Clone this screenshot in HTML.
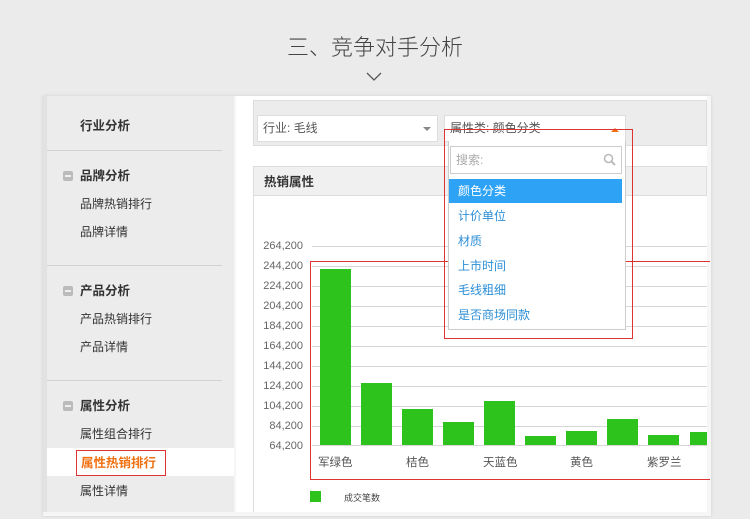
<!DOCTYPE html>
<html><head><meta charset="utf-8"><style>
*{margin:0;padding:0;box-sizing:border-box}
body{width:750px;height:519px;background:#ebebeb;font-family:"Liberation Sans","Noto Sans CJK SC",sans-serif;position:relative;overflow:hidden;color:#333}
.a{position:absolute}
.title{left:0;width:750px;top:30px;text-align:center;font-size:22px;color:#444;font-weight:300}
.side{left:43px;top:96px;width:191px;height:416px;background:#ececec;border-left:4px solid #e2e2e2}
.s{position:absolute;font-size:12px;color:#333;line-height:14px}
.b{font-weight:bold;font-size:12.5px}
.hr{position:absolute;left:0;width:175px;height:1px;background:#d2d2d2}
.ic{position:absolute;left:16px;width:10px;height:10px;background:#bbb;border-radius:2px}
.ic:after{content:"";position:absolute;left:2px;top:4px;width:6px;height:2px;background:#eee}
.main{left:236px;top:96px;width:471px;height:416px;background:#fff}
.grid{position:absolute;left:312px;width:395px;height:1px;background:#d6d6d6}
.yl{position:absolute;left:257px;width:46px;text-align:right;font-size:11px;color:#666;line-height:13px}
.bar{position:absolute;width:31px;background:#2ec21c;bottom:74px}
.xl{position:absolute;top:454px;font-size:11.5px;color:#555}
.dd{font-size:12px;color:#2d8fd6;position:absolute;left:458px;line-height:14px}
</style></head><body>
<div class="a title">三、竞争对手分析</div>
<svg class="a" style="left:366px;top:71px" width="16" height="12"><path d="M1 2 L8 9 L15 2" stroke="#555" stroke-width="1.3" fill="none"/></svg>
<div class="a" style="left:43px;top:96px;width:668px;height:420px;background:#f6f6f6;box-shadow:0 0 3px #ccc"></div>
<div class="a side">
<div class="s b" style="left:33px;top:23px">行业分析</div>
<div class="hr" style="top:54px"></div>
<div class="ic" style="top:75px"></div><div class="s b" style="left:33px;top:73px">品牌分析</div>
<div class="s" style="left:33px;top:101px">品牌热销排行</div>
<div class="s" style="left:33px;top:129px">品牌详情</div>
<div class="hr" style="top:169px"></div>
<div class="ic" style="top:190px"></div><div class="s b" style="left:33px;top:188px">产品分析</div>
<div class="s" style="left:33px;top:216px">产品热销排行</div>
<div class="s" style="left:33px;top:244px">产品详情</div>
<div class="hr" style="top:284px"></div>
<div class="ic" style="top:305px"></div><div class="s b" style="left:33px;top:303px">属性分析</div>
<div class="s" style="left:33px;top:331px">属性组合排行</div>
<div class="a" style="left:0;top:352px;width:187px;height:28px;background:#fff"></div>
<div class="a" style="left:29px;top:354px;width:90px;height:26px;border:1px solid #d33"></div>
<div class="s b" style="left:34px;top:360px;color:#f07010">属性热销排行</div>
<div class="s" style="left:33px;top:388px">属性详情</div>
</div>
<div class="a main"></div>
<div class="a" style="left:253px;top:100px;width:454px;height:46px;background:#ececec;border:1px solid #ddd"></div>
<div class="a" style="left:257px;top:115px;width:181px;height:27px;background:#fff;border:1px solid #ddd;font-size:12px;color:#555;padding:5px 5px;line-height:14px">行业: 毛线</div>
<div class="a" style="left:423px;top:127px;border:4px solid transparent;border-top:4px solid #888"></div>
<div class="a" style="left:444px;top:115px;width:182px;height:27px;background:#fff;border:1px solid #ddd;font-size:12px;color:#555;padding:5px 5px;line-height:14px">属性类: 颜色分类</div>
<div class="a" style="left:611px;top:124px;border:4px solid transparent;border-bottom:4px solid #f07010"></div>
<div class="a" style="left:253px;top:166px;width:454px;height:30px;background:#f0f0f0;border:1px solid #ddd;font-size:12.5px;font-weight:bold;padding:8px 10px;line-height:14px">热销属性</div>
<div class="a" style="left:253px;top:196px;width:1px;height:316px;background:#ddd"></div>
<div class="grid" style="top:246px"></div><div class="grid" style="top:266px"></div><div class="grid" style="top:286px"></div><div class="grid" style="top:306px"></div><div class="grid" style="top:326px"></div><div class="grid" style="top:346px"></div><div class="grid" style="top:366px"></div><div class="grid" style="top:386px"></div><div class="grid" style="top:406px"></div><div class="grid" style="top:426px"></div><div class="grid" style="top:445px"></div>
<div class="yl" style="top:240px">264,200</div><div class="yl" style="top:260px">244,200</div><div class="yl" style="top:280px">224,200</div><div class="yl" style="top:300px">204,200</div><div class="yl" style="top:320px">184,200</div><div class="yl" style="top:340px">164,200</div><div class="yl" style="top:360px">144,200</div><div class="yl" style="top:380px">124,200</div><div class="yl" style="top:400px">104,200</div><div class="yl" style="top:420px">84,200</div><div class="yl" style="top:440px">64,200</div>
<div class="bar" style="left:320px;top:269px"></div><div class="bar" style="left:361px;top:383px"></div><div class="bar" style="left:402px;top:409px"></div><div class="bar" style="left:443px;top:422px"></div><div class="bar" style="left:484px;top:401px"></div><div class="bar" style="left:525px;top:436px"></div><div class="bar" style="left:566px;top:431px"></div><div class="bar" style="left:607px;top:419px"></div><div class="bar" style="left:648px;top:435px"></div><div class="bar" style="left:690px;top:432px;width:17px"></div>
<div class="xl" style="left:318px">军绿色</div><div class="xl" style="left:406px">桔色</div><div class="xl" style="left:483px">天蓝色</div><div class="xl" style="left:570px">黄色</div><div class="xl" style="left:647px">紫罗兰</div>
<div class="a" style="left:310px;top:261px;width:400px;height:219px;border:1px solid #d33;border-right:none"></div>
<div class="a" style="left:310px;top:491px;width:11px;height:11px;background:#2ec21c"></div>
<div class="a" style="left:344px;top:491px;font-size:9px;color:#444">成交笔数</div>
<div class="a" style="left:448px;top:141px;width:178px;height:189px;background:#fff;border:1px solid #ccc;border-top:none"></div>
<div class="a" style="left:450px;top:146px;width:172px;height:28px;border:1px solid #ccc;font-size:12px;color:#aaa;padding:6px 5px;line-height:14px">搜索:</div>
<svg class="a" style="left:603px;top:153px" width="13" height="13"><circle cx="5.5" cy="5.5" r="4" stroke="#bbb" stroke-width="1.6" fill="none"/><path d="M8.5 8.5L12 12" stroke="#bbb" stroke-width="2"/></svg>
<div class="a" style="left:449px;top:179px;width:173px;height:24px;background:#2ea3f5"></div>
<div class="dd" style="top:184px;color:#fff">颜色分类</div>
<div class="dd" style="top:209px">计价单位</div>
<div class="dd" style="top:234px">材质</div>
<div class="dd" style="top:259px">上市时间</div>
<div class="dd" style="top:283px">毛线粗细</div>
<div class="dd" style="top:308px">是否商场同款</div>
<div class="a" style="left:444px;top:129px;width:189px;height:210px;border:1px solid #d33"></div>
</body></html>
